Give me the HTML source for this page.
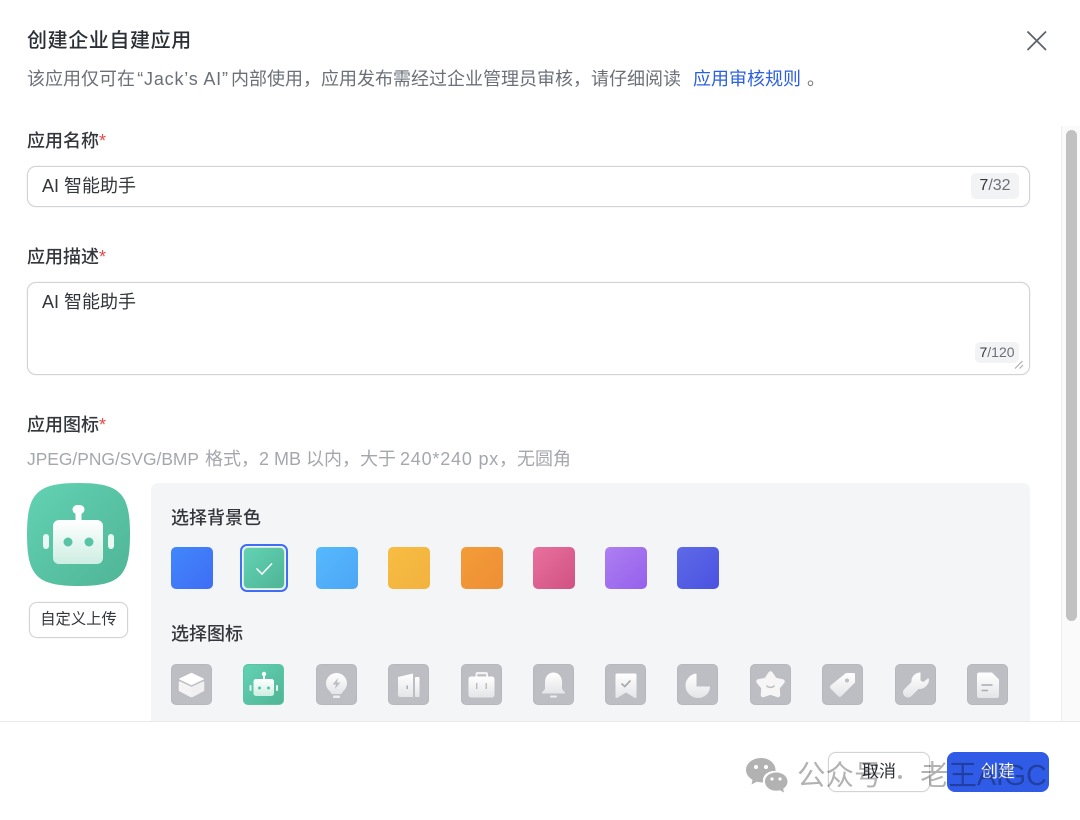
<!DOCTYPE html>
<html lang="zh"><head><meta charset="utf-8"><title>创建企业自建应用</title>
<style>
*{box-sizing:border-box}
html,body{margin:0;padding:0;background:#fff}
body{width:1080px;height:820px;position:relative;overflow:hidden;font-family:"Liberation Sans","Noto Sans CJK SC",sans-serif;color:#2b2f36}
.t{position:absolute;white-space:nowrap;line-height:24px}
.lab{font-size:18px;color:#33363b;font-weight:500}
.lab i{font-style:normal;color:#e5484d;font-weight:400}
.inp{position:absolute;left:27px;width:1003px;background:#fff;border:1px solid #d2d3d6;border-radius:9px;box-shadow:0 0 1px #d2d3d6}
.cnt{position:absolute;background:#f2f3f5;border-radius:5px;color:#6b7078;text-align:center}
.cnt b{font-weight:500;color:#33363b}
.sw{position:absolute;top:547px;width:42px;height:42px;border-radius:5px}
.tile{position:absolute;top:664px;width:41px;height:41px;border-radius:5px;background:#bcbec3;border:1px solid #b6b8bd}
.tile svg{display:block;position:absolute;left:-1px;top:-1px}
.btn{position:absolute;top:752px;width:102px;height:40px;border-radius:8px;text-align:center;font-size:17px;line-height:38px}
.ib{display:inline-block;white-space:pre}
</style></head><body>
<svg width="0" height="0" style="position:absolute"><defs>
<linearGradient id="w" x1="0" y1="0" x2="0" y2="1"><stop offset="0" stop-color="#fff"/><stop offset="1" stop-color="#e4e5e7"/></linearGradient>
<linearGradient id="wg" x1="0" y1="0" x2="0" y2="1"><stop offset="0" stop-color="#fff"/><stop offset="1" stop-color="#cdeee2"/></linearGradient>
</defs></svg>

<div class="t" style="left:27px;top:29px;font-size:20px;font-weight:500;color:#2b2f36;letter-spacing:.6px">创建企业自建应用</div>
<svg style="position:absolute;left:1026px;top:30px" width="22" height="22" viewBox="0 0 22 22"><path d="M1.500 1.500L20 20M20 1.500L1.500 20" stroke="#5f646c" stroke-width="1.800" fill="none"/></svg>
<div class="t" style="left:27px;top:67px;font-size:18px;color:#6b7078">该应用仅可在<span class="ib" style="width:96px;text-align:center;letter-spacing:.8px">“Jack’s AI”</span>内部使用&#65292;应用发布需经过企业管理员审核&#65292;请仔细阅读</div>
<div class="t" style="left:693px;top:67px;font-size:18px;color:#2b5fe0">应用审核规则</div>
<div class="t" style="left:807px;top:67px;font-size:18px;color:#6b7078">。</div>

<div style="position:absolute;left:1061px;top:126px;width:19px;height:595px;background:#fafafa;border-left:1px solid #eeeeee"></div>
<div style="position:absolute;left:1066px;top:130px;width:11px;height:491px;background:#c1c1c1;border-radius:6px"></div>

<div class="t lab" style="left:27px;top:129px">应用名称<i>*</i></div>
<div class="inp" style="top:166px;height:41px"></div>
<div class="t" style="left:42px;top:174px;font-size:18px;color:#33363b">AI 智能助手</div>
<div class="cnt" style="left:971px;top:173px;width:48px;height:26px;font-size:16px;line-height:26px"><b>7</b>/32</div>

<div class="t lab" style="left:27px;top:245px">应用描述<i>*</i></div>
<div class="inp" style="top:282px;height:93px"></div>
<div class="t" style="left:42px;top:290px;font-size:18px;color:#33363b">AI 智能助手</div>
<div class="cnt" style="left:975px;top:342px;width:44px;height:21px;font-size:14px;line-height:21px"><b>7</b>/120</div>
<svg style="position:absolute;left:1014px;top:360px" width="10" height="9" viewBox="0 0 10 9"><path d="M1 8.500L8.500 1M5.500 8.500L9 5" stroke="#a6a8ad" stroke-width="1" fill="none"/></svg>

<div class="t lab" style="left:27px;top:413px">应用图标<i>*</i></div>
<div class="t" style="left:27px;top:447px;font-size:18px;color:#a4a7ad"><span class="ib" style="width:178px;font-size:17.400px">JPEG/PNG/SVG/BMP </span>格式&#65292;<span class="ib" style="width:47px">2 MB </span>以内&#65292;大于<span class="ib" style="width:4px"> </span><span class="ib" style="width:99px;letter-spacing:.8px">240*240 px</span>&#65292;无圆角</div>

<svg style="position:absolute;left:27px;top:483px" width="103" height="103" viewBox="0 0 103 103">
<defs><linearGradient id="g1" x1="0" y1="0" x2="1" y2="1"><stop offset="0" stop-color="#62d2b3"/><stop offset="1" stop-color="#4fb596"/></linearGradient></defs>
<path d="M51.500 0C93 0 103 10 103 51.500S93 103 51.500 103S0 93 0 51.500S10 0 51.500 0Z" fill="url(#g1)"/>
<rect x="26" y="37" width="50" height="44" rx="6" fill="url(#wg)"/>
<rect x="48.500" y="28" width="6" height="10" fill="#fff"/>
<rect x="45.500" y="22" width="12" height="9" rx="4.500" fill="#fff"/>
<rect x="16" y="51" width="6" height="15" rx="3" fill="#e8f8f2"/>
<rect x="81" y="51" width="6" height="15" rx="3" fill="#e8f8f2"/>
<circle cx="41" cy="59" r="4.500" fill="#58c4a5"/><circle cx="62" cy="59" r="4.500" fill="#58c4a5"/>
</svg>
<div style="position:absolute;left:29px;top:602px;width:99px;height:36px;border:1px solid #d2d3d6;box-shadow:0 0 1px #d2d3d6;border-radius:8px;text-align:center;font-size:15.300px;line-height:34px;color:#33363b">自定义上传</div>

<div style="position:absolute;left:151px;top:483px;width:879px;height:238px;background:#f4f5f7;border-radius:7px 7px 0 0"></div>
<div class="t" style="left:171px;top:506px;font-size:18px;font-weight:500;color:#33363b">选择背景色</div>
<div class="sw" style="left:171px;background:linear-gradient(135deg,#4087fb,#3f6df5)"></div>
<div style="position:absolute;left:240px;top:544px;width:48px;height:48px;border:2px solid #3f6df5;border-radius:7px"></div>
<div style="position:absolute;left:243px;top:547px;width:42px;height:42px;border:1px solid #c9ece0;border-radius:5px;background:linear-gradient(135deg,#62d2b3,#4fb596)"></div>
<svg style="position:absolute;left:255px;top:561px" width="19" height="15" viewBox="0 0 19 15"><path d="M1.500 7.500L7 13L17 2.500" stroke="#fff" stroke-width="1.500" fill="none"/></svg>
<div class="sw" style="left:316px;background:linear-gradient(135deg,#55b9fd,#4da6f5)"></div>
<div class="sw" style="left:388px;background:linear-gradient(135deg,#f7bd42,#f2b23f)"></div>
<div class="sw" style="left:461px;background:linear-gradient(135deg,#f39c38,#ee8f36)"></div>
<div class="sw" style="left:533px;background:linear-gradient(135deg,#e9709e,#d05282)"></div>
<div class="sw" style="left:605px;background:linear-gradient(135deg,#ad7ff2,#9560ec)"></div>
<div class="sw" style="left:677px;background:linear-gradient(135deg,#5e6ae8,#4a52e0)"></div>

<div class="t" style="left:171px;top:622px;font-size:18px;font-weight:500;color:#33363b">选择图标</div>

<div class="tile" style="left:171px"><svg width="41" height="41" viewBox="0 0 41 41"><g stroke-linejoin="round" stroke-width="1.500"><path d="M20.500 9.500L32 15L20.500 20.500L9 15Z" fill="#fff" stroke="#fff"/><path d="M8.500 18L19.800 23.300V32.500L8.500 26.500Z" fill="#f4f4f5" stroke="#f4f4f5"/><path d="M32.500 18L21.200 23.300V32.500L32.500 26.500Z" fill="#f0f0f1" stroke="#f0f0f1"/></g></svg></div>
<div class="tile" style="left:243px;background:linear-gradient(135deg,#62d2b3,#4fb596);border-color:#5ac4a5"><svg width="41" height="41" viewBox="0 0 41 41"><rect x="10.500" y="15" width="20.500" height="17" rx="2.500" fill="url(#wg)"/><rect x="20" y="11" width="2" height="5" fill="#fff"/><circle cx="21" cy="10" r="2.200" fill="#fff"/><rect x="6.500" y="21" width="2" height="6" rx="1" fill="#e8f8f2"/><rect x="33" y="21" width="2" height="6" rx="1" fill="#e8f8f2"/><circle cx="16.500" cy="24" r="1.500" fill="#58c4a5"/><circle cx="25.500" cy="24" r="1.500" fill="#58c4a5"/></svg></div>
<div class="tile" style="left:316px"><svg width="41" height="41" viewBox="0 0 41 41"><path d="M20.500 9C26.300 9 31 13.700 31 19.500C31 23.500 28.500 26 26.500 28L25.500 30H15.500L14.500 28C12.500 26 10 23.500 10 19.500C10 13.700 14.700 9 20.500 9Z" fill="url(#w)"/><rect x="17" y="31.500" width="7" height="2.500" rx="1" fill="#eee"/><path d="M22 14L16.500 20.500H20L18.800 25L24.500 18.500H21Z" fill="#bcbec3"/></svg></div>
<div class="tile" style="left:388px"><svg width="41" height="41" viewBox="0 0 41 41"><path d="M10 13L25 9.500V33H12C11 33 10 32 10 31Z" fill="url(#w)"/><rect x="27" y="13" width="4.500" height="20" rx="1" fill="url(#w)"/><rect x="18.500" y="21.500" width="1.500" height="3.500" fill="#a9abb1"/></svg></div>
<div class="tile" style="left:461px"><svg width="41" height="41" viewBox="0 0 41 41"><path d="M14.500 12.500V10C14.500 8.800 15.300 8 16.500 8H25C26.200 8 27 8.800 27 10V12.500H25V10.200H16.500V12.500Z" fill="#f2f2f3"/><rect x="7.500" y="12.500" width="26" height="21" rx="2.500" fill="url(#w)"/><rect x="15" y="19" width="1.500" height="6" fill="#bcbec3"/><rect x="24.500" y="19" width="1.500" height="6" fill="#bcbec3"/></svg></div>
<div class="tile" style="left:533px"><svg width="41" height="41" viewBox="0 0 41 41"><path d="M20.500 8.500C26 8.500 29 13 29 18V25L32 28.500V29.500H9V28.500L12 25V18C12 13 15 8.500 20.500 8.500Z" fill="url(#w)"/><rect x="17" y="31.500" width="7" height="2" rx="1" fill="#eee"/></svg></div>
<div class="tile" style="left:605px"><svg width="41" height="41" viewBox="0 0 41 41"><path d="M10.500 11C10.500 10 11.200 9.500 12 9.500H30C30.800 9.500 31.500 10 31.500 11V33C31.500 34 30.500 34.300 29.500 33.700L21 28.500L12.500 33.700C11.500 34.300 10.500 34 10.500 33Z" fill="url(#w)"/><path d="M16.500 19.500L19.800 22.500L25.500 16.500" stroke="#a9abb1" stroke-width="1.800" fill="none"/></svg></div>
<div class="tile" style="left:677px"><svg width="41" height="41" viewBox="0 0 41 41"><path d="M19.500 9.500V22.500H33C33 29 27.500 34 21 34C14.500 34 8.500 28.500 8.500 21.500C8.500 15.500 13.500 10 19.500 9.500Z" fill="url(#w)"/><path d="M22.500 9.300C27.500 10 31.800 14.500 32.500 19.500H22.500Z" fill="#bcbec3"/></svg></div>
<div class="tile" style="left:750px"><svg width="41" height="41" viewBox="0 0 41 41"><path d="M20.500 9.500L25 16L32.500 17.500L27.500 23.500L28 31L20.500 28.500L13 31L13.500 23.500L8.500 17.500L16 16Z" fill="#f6f6f7" stroke="#f6f6f7" stroke-width="4.500" stroke-linejoin="round"/><path d="M16.500 21.500C18 24 23 24 24.500 21.500" stroke="#bcbec3" stroke-width="1.500" fill="none"/></svg></div>
<div class="tile" style="left:822px"><svg width="41" height="41" viewBox="0 0 41 41"><path d="M8.500 21.500L24 9H32C32.500 9 33 9.500 33 10V18.500L19.500 32C18.500 33 17 33 16 32L9 25C8 24 7.800 22.500 8.500 21.500Z" fill="url(#w)"/><circle cx="25" cy="16.500" r="2" fill="#bcbec3"/></svg></div>
<div class="tile" style="left:895px"><svg width="41" height="41" viewBox="0 0 41 41"><path d="M25.500 8.500C20 8.500 16 13 16.500 18L9.500 25C7.500 27 7.500 30 9.500 32C11.500 34 14.500 34 16.500 32L23.500 25C29 25.500 34 21 34 15.500C34 14.500 33 14.200 32.500 14.800L28.500 18L25.500 16.500V9.500C25.500 9 25.500 8.500 25.500 8.500Z" fill="url(#w)"/></svg></div>
<div class="tile" style="left:967px"><svg width="41" height="41" viewBox="0 0 41 41"><path d="M12 8.500H25L32 15.500V32C32 33 31 34 30 34H12C11 34 10 33 10 32V10.500C10 9.500 11 8.500 12 8.500Z" fill="url(#w)"/><path d="M14.500 21H25.500" stroke="#a9abb1" stroke-width="1.500"/><path d="M14.500 26.500H21" stroke="#a9abb1" stroke-width="1.500"/></svg></div>

<div style="position:absolute;left:0;top:721px;width:1080px;height:99px;background:#fff;border-top:1.500px solid #e8e9eb"></div>

<div class="btn" style="left:828px;border:1px solid #d2d3d6;box-shadow:0 0 1px #d2d3d6;color:#2b2f36;background:#fff">取消</div>
<div class="btn" style="left:947px;background:#2f5be7;color:#fff;line-height:40px">创建</div>

<svg style="position:absolute;left:746px;top:758px" width="42" height="36" viewBox="0 0 42 36"><path d="M15 0C23 0 29.500 5.300 29.500 12C29.500 12.400 29.500 12.800 29.400 13.100C24 12.300 17 16 17 22.500C17 23.200 17.100 23.800 17.200 24.300C16.500 24.400 15.800 24.400 15 24.400C13.500 24.400 12 24.200 10.700 23.800L5.500 26.500L6.500 21.800C2.600 19.600 0 16 0 12C0 5.300 6.700 0 15 0Z" fill="#b2b2b2"/><path d="M30 14.500C36.600 14.500 41.500 18.500 41.500 23.500C41.500 26.500 39.700 29 37.200 30.700L38 34.500L33.800 32.300C32.600 32.500 31.300 32.700 30 32.700C23.800 32.700 19 28.700 19 23.500C19 18.500 23.800 14.500 30 14.500Z" fill="#b2b2b2"/><circle cx="10" cy="9" r="2" fill="#fff"/><circle cx="20" cy="9" r="2" fill="#fff"/><circle cx="26" cy="21" r="1.600" fill="#fff"/><circle cx="34" cy="21" r="1.600" fill="#fff"/></svg>
<div class="t" style="left:797px;top:758px;font-size:28.500px;line-height:36px;color:rgba(0,0,0,.3)">公众号</div>
<div style="position:absolute;left:898px;top:775px;width:4px;height:4px;border-radius:50%;background:rgba(0,0,0,.3)"></div>
<div class="t" style="left:920px;top:758px;font-size:28.500px;line-height:36px;color:rgba(0,0,0,.3)">老王AIGC</div>
</body></html>
